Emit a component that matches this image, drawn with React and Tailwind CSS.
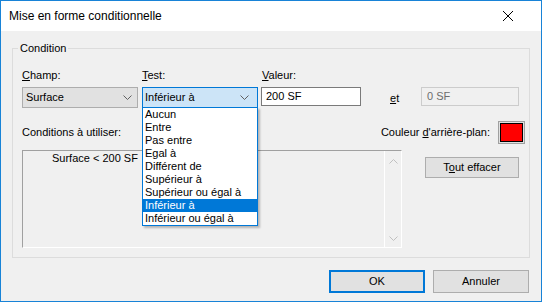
import React from "react";

const items = [
  "Aucun",
  "Entre",
  "Pas entre",
  "Egal à",
  "Différent de",
  "Supérieur à",
  "Supérieur ou égal à",
  "Inférieur à",
  "Inférieur ou égal à",
];

function Chevron({ color = "#606060", up = false }) {
  return (
    <svg width="9" height="5" viewBox="0 0 9 5" className="block">
      <path
        d={up ? "M0.5 4.5 L4.5 0.5 L8.5 4.5" : "M0.5 0.5 L4.5 4.5 L8.5 0.5"}
        stroke={color}
        strokeWidth="1"
        fill="none"
      />
    </svg>
  );
}

export default function App() {
  return (
    <div className="w-[542px] h-[302px] border border-[#1883d7] bg-[#f0f0f0] flex flex-col overflow-hidden font-['Liberation_Sans',Arial,sans-serif] text-[11px] text-black">
      {/* title bar */}
      <div className="h-[30px] shrink-0 bg-white flex items-center justify-between pl-[8px] pr-[28px]">
        <span className="text-[12px]">Mise en forme conditionnelle</span>
        <svg width="10" height="10" viewBox="0 0 10 10">
          <path d="M0 0 L10 10 M10 0 L0 10" stroke="#000" strokeWidth="1" />
        </svg>
      </div>

      <div className="px-[11px] pt-[17px]">
        {/* group box */}
        <div className="relative h-[210px] border border-[#dcdcdc] pl-[9px] pt-[19px]">
          <span className="absolute left-[5px] top-[-8px] px-[2px] bg-[#f0f0f0] leading-[14px]">
            Condition
          </span>

          <div className="flex h-[14px] leading-[14px]">
            <div className="w-[120px]">
              <u>C</u>hamp:
            </div>
            <div className="w-[119px]">
              <u>T</u>est:
            </div>
            <div className="pl-[1px]">
              <u>V</u>aleur:
            </div>
          </div>

          <div className="flex items-start mt-[5px]">
            <div className="w-[116px] h-[21px] mr-[4px] border border-[#adadad] bg-[#e1e1e1] flex items-center justify-between pl-[3px] pr-[5px]">
              <span>Surface</span>
              <Chevron />
            </div>
            <div className="relative w-[116px] h-[21px] mr-[3px] border border-[#0078d7] bg-[#cce4f7] flex items-center justify-between pl-[2px] pr-[8px]">
              <span>Inférieur à</span>
              <Chevron />
              <div className="absolute left-[-1px] top-[19px] z-10 w-[116px] border border-[#0078d7] bg-white py-0 shadow-[2px_2px_2px_rgba(0,0,0,0.25)]">
                {items.map((it) => (
                  <div
                    key={it}
                    className={`h-[13px] leading-[13px] pl-[2px] ${
                      it === "Inférieur à" ? "bg-[#0078d7] text-white" : ""
                    }`}
                  >
                    {it}
                  </div>
                ))}
              </div>
            </div>
            <div className="w-[100px] h-[19px] border border-[#7a7a7a] bg-white flex items-center pl-[4px]">
              200 SF
            </div>
            <div className="w-[60px] pl-[29px] mt-[4px] leading-[14px]">
              <u>e</u>t
            </div>
            <div className="w-[98px] h-[19px] border border-[#cccccc] bg-[#f0f0f0] text-[#6d6d6d] flex items-center pl-[5px]">
              0 SF
            </div>
          </div>

          <div className="flex items-center h-[23px] mt-[13px]">
            <span>Conditions à utiliser:</span>
            <div className="ml-auto mr-[4px] flex items-center">
              <span>
                Couleur <u>d</u>&apos;arrière-plan:
              </span>
              <div className="ml-[8px] w-[27px] h-[23px] border border-[#a0a0a0] bg-[#e1e1e1] p-[1px]">
                <div className="w-full h-full border border-black bg-[#ff0000]" />
              </div>
            </div>
          </div>

          <div className="flex items-start mt-[6px]">
            <div className="w-[380px] h-[98px] flex border border-t-[#a0a0a0] border-l-[#a0a0a0] border-r-white border-b-white">
              <div className="flex-1 pl-[29px] leading-[14px]">Surface &lt; 200 SF</div>
              <div className="w-[17px] border-l border-white flex flex-col justify-between items-center pt-[8px] pb-[6px]">
                <Chevron color="#c0c0c0" up />
                <Chevron color="#c0c0c0" />
              </div>
            </div>
            <div className="ml-[23px] mt-[7px] w-[94px] h-[21px] border border-[#adadad] bg-[#e1e1e1] flex items-center justify-center">
              <span>
                T<u>o</u>ut effacer
              </span>
            </div>
          </div>
        </div>

        <div className="flex justify-end gap-[8px] mt-[12px] mr-[1px]">
          <div className="w-[96px] h-[23px] border-2 border-[#0078d7] bg-[#e1e1e1] flex items-center justify-center">
            OK
          </div>
          <div className="w-[96px] h-[23px] border border-[#adadad] bg-[#e1e1e1] flex items-center justify-center">
            Annuler
          </div>
        </div>
      </div>
    </div>
  );
}
